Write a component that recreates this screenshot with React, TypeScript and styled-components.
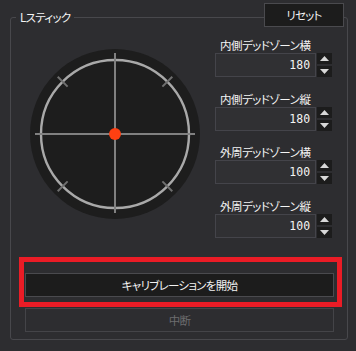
import React from "react";
import styled, { createGlobalStyle } from "styled-components";

const Global = createGlobalStyle`
  html, body { margin: 0; padding: 0; background: #2d2d30; }
  body {
    width: 356px; height: 351px; overflow: hidden;
    font-family: "Noto Sans CJK JP", "Noto Sans", sans-serif;
    font-feature-settings: "palt";
    color: #f2f2f2;
  }
`;

const Page = styled.div`
  width: 356px;
  height: 351px;
  box-sizing: border-box;
  padding: 17px 8px 0 10px;
`;

const Panel = styled.section`
  position: relative;
  box-sizing: border-box;
  width: 338px;
  height: 323px;
  border: 1px solid #48484c;
  border-radius: 3px;
  display: flex;
  flex-direction: column;
`;

const Title = styled.span`
  position: absolute;
  top: -10px;
  left: 5px;
  padding: 0 4px;
  background: #2d2d30;
  font-size: 11.5px;
  letter-spacing: -0.7px;
  line-height: 18px;
  color: #f4f4f4;
`;

const Button = styled.button<{ $disabled?: boolean; $dark?: boolean }>`
  box-sizing: border-box;
  height: 24px;
  border: 1px solid ${(p) => (p.$disabled ? "#444448" : "#4a4a4e")};
  background: ${(p) => (p.$dark ? "#1c1c1c" : "transparent")};
  color: ${(p) => (p.$disabled ? "#6c6c6e" : "#f2f2f2")};
  font-family: "Noto Sans CJK JP", "Noto Sans", sans-serif;
  font-feature-settings: "palt";
  font-size: 11.5px;
  letter-spacing: -0.7px;
  padding: 0;
  margin: 0;
  cursor: default;
`;

const ResetButton = styled(Button)`
  position: absolute;
  top: -15px;
  right: 3px;
  width: 80px;
  height: 24px;
`;

const TopRow = styled.div`
  display: flex;
  align-items: flex-start;
  padding: 19px 0 0 19px;
  gap: 15px;
`;

const Stick = styled.div`
  margin-top: 12px;
  width: 170px;
  height: 170px;
  flex: none;
`;

const Fields = styled.div`
  display: flex;
  flex-direction: column;
  gap: 13.7px;
  width: 117px;
`;

const Field = styled.div`
  display: flex;
  flex-direction: column;
`;

const Label = styled.label`
  font-size: 11.5px;
  letter-spacing: -0.5px;
  line-height: 16px;
  padding-left: 5px;
  color: #f4f4f4;
`;

const SpinRow = styled.div`
  display: flex;
  gap: 1px;
  height: 24px;
`;

const NumBox = styled.div`
  box-sizing: border-box;
  width: 102px;
  height: 24px;
  border: 1px solid #44444a;
  background: #303033;
  display: flex;
  align-items: center;
  justify-content: flex-end;
  padding-right: 5px;
  font-family: "DejaVu Sans Mono", "Liberation Mono", monospace;
  font-size: 11.5px;
  color: #f4f4f4;
`;

const Spinner = styled.div`
  display: flex;
  flex-direction: column;
  justify-content: space-between;
  width: 15px;
`;

const SpinBtn = styled.div`
  height: 11px;
  background: #1c1c1c;
  display: flex;
  align-items: center;
  justify-content: center;
`;

const Bottom = styled.div`
  display: flex;
  flex-direction: column;
  gap: 11px;
  padding: 0 13px 0 14px;
  margin-top: 35px;
`;

const Highlight = styled.div`
  position: absolute;
  left: 8px;
  top: 239px;
  width: 323px;
  height: 50px;
  box-sizing: border-box;
  border: 5px solid #ea1c26;
  pointer-events: none;
`;

const Arrow = ({ up }: { up?: boolean }) => (
  <svg width="9" height="5" viewBox="0 0 9 5">
    <polygon points={up ? "0,5 9,5 4.5,0" : "0,0 9,0 4.5,5"} fill="#d8d8d8" />
  </svg>
);

const NumField = ({ label, value }: { label: string; value: number }) => (
  <Field>
    <Label>{label}</Label>
    <SpinRow>
      <NumBox>{value}</NumBox>
      <Spinner>
        <SpinBtn>
          <Arrow up />
        </SpinBtn>
        <SpinBtn>
          <Arrow />
        </SpinBtn>
      </Spinner>
    </SpinRow>
  </Field>
);

const StickView = () => {
  const c = 85;
  const d = Math.SQRT1_2;
  const ticks = [
    [-1, -1],
    [1, -1],
    [-1, 1],
    [1, 1],
  ];
  return (
    <svg width="170" height="170" viewBox="0 0 170 170">
      <circle cx={c} cy={c} r={85} fill="#1d1d1d" />
      <circle cx={c} cy={c} r={74} fill="none" stroke="#a9a9a9" strokeWidth={2.4} />
      <line x1={5} y1={c} x2={165} y2={c} stroke="#808080" strokeWidth={2} />
      <line x1={c} y1={4} x2={c} y2={164} stroke="#808080" strokeWidth={2} />
      {ticks.map(([sx, sy], i) => (
        <line
          key={i}
          x1={c + sx * d * 67}
          y1={c + sy * d * 67}
          x2={c + sx * d * 81}
          y2={c + sy * d * 81}
          stroke="#707070"
          strokeWidth={2}
        />
      ))}
      <circle cx={c} cy={c} r={6} fill="#ff4012" />
    </svg>
  );
};

export default function App() {
  return (
    <>
      <Global />
      <Page>
        <Panel>
          <Title>Lスティック</Title>
          <ResetButton $dark>リセット</ResetButton>
          <TopRow>
            <Stick>
              <StickView />
            </Stick>
            <Fields>
              <NumField label="内側デッドゾーン横" value={180} />
              <NumField label="内側デッドゾーン縦" value={180} />
              <NumField label="外周デッドゾーン横" value={100} />
              <NumField label="外周デッドゾーン縦" value={100} />
            </Fields>
          </TopRow>
          <Bottom>
            <Button $dark>キャリブレーションを開始</Button>
            <Button $disabled>中断</Button>
          </Bottom>
          <Highlight />
        </Panel>
      </Page>
    </>
  );
}
